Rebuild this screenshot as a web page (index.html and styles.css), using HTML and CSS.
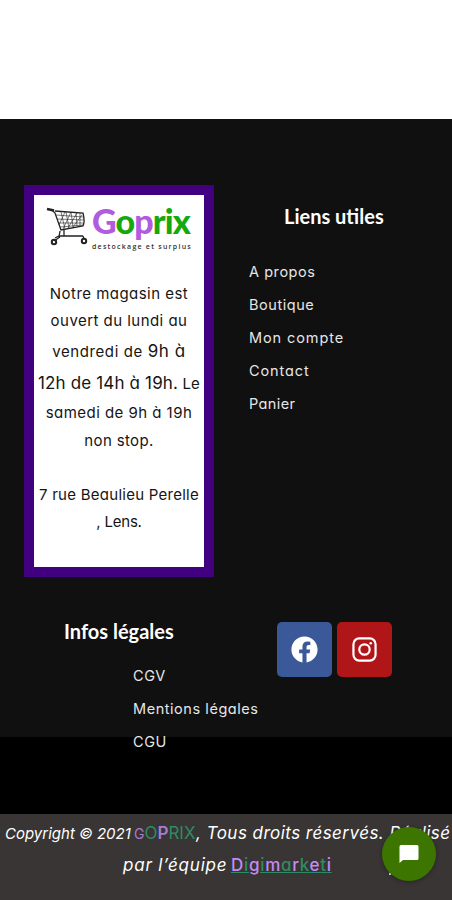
FILE: index.html
```html
<!DOCTYPE html>
<html lang="fr">
<head>
    <meta charset="UTF-8">
    <meta name="viewport" content="width=device-width, initial-scale=1.0">
    <title>Goprix</title>
    <link rel="stylesheet" href="styles.css">
</head>
<body>
    <main class="page-end"></main>
    <footer>
        <div class="footer-widgets">
            <section class="store-card">
                <div class="logo">
                    <svg class="cart" viewBox="0 0 42 40" fill="none" stroke="#222">
                        <path d="M1 3l7 1.500" stroke-width="2.600"/>
                        <path d="M6 4l3 3 6 17 22-4c2-4 1-9 0-13L9 5M14 25l-1 6M18 24v6M9 32l4-2h24M14 31l-6 4M37 30l1 3" stroke-width="1.300"/>
                        <path d="M10 9l27 2M11 13l27 1M12 17l25 0M14 21l23-2M15 6l4 17M20 6l3 16M25 6l2 15M30 6l1 14M34 7v13M19 6l-6 13M25 6l-8 17M31 7l-9 15M36 9l-9 12" stroke-width=".6"/>
                        <circle cx="8" cy="36" r="2.200" stroke-width="2"/>
                        <circle cx="38" cy="35" r="2.200" stroke-width="2"/>
                    </svg>
                    <div class="brand">
                        <div class="brand-name"><span class="violet">G</span>o<span class="violet">p</span>rix</div>
                        <div class="slogan">destockage et surplus</div>
                    </div>
                </div>
                <div class="hours">
                    <div class="l1">Notre magasin est</div>
                    <div class="l2">ouvert du lundi au</div>
                    <div class="l3">vendredi de <span class="big">9h à</span></div>
                    <div class="l4"><span class="big">12h de 14h à 19h.</span> Le</div>
                    <div class="l5">samedi de 9h à 19h</div>
                    <div class="l6">non stop.</div>
                </div>
                <div class="address">
                    <div class="l7">7 rue Beaulieu Perelle</div>
                    <div class="l8">, Lens.</div>
                </div>
            </section>
            <section class="useful">
                <h2>Liens utiles</h2>
                <ul>
                    <li class="propos">A propos</li>
                    <li class="boutique">Boutique</li>
                    <li class="compte">Mon compte</li>
                    <li class="contact">Contact</li>
                    <li class="panier">Panier</li>
                </ul>
            </section>
        </div>
        <div class="footer-bottom">
            <section class="legal">
                <h2>Infos légales</h2>
                <ul>
                    <li class="cgv">CGV</li>
                    <li class="mentions">Mentions légales</li>
                    <li class="cgu">CGU</li>
                </ul>
            </section>
            <div class="social">
                <a class="facebook" aria-label="Facebook">
                    <svg viewBox="0 0 512 512" fill="#fff"><path d="M504 256C504 119 393 8 256 8S8 119 8 256c0 123.800 90.700 226.400 209.300 245V327.700h-63V256h63v-54.600c0-62.200 37-96.500 93.700-96.500 27.100 0 55.500 4.800 55.500 4.800v61h-31.300c-30.800 0-40.400 19.100-40.400 38.700V256h68.800l-11 71.700h-57.800V501C413.300 482.400 504 379.800 504 256z"/></svg>
                </a>
                <a class="instagram" aria-label="Instagram">
                    <svg viewBox="0 0 26 26" fill="none" stroke="#fff" stroke-width="2.300"><rect x="1.500" y="1.500" width="23" height="23" rx="6"/><circle cx="13" cy="13" r="5.400"/><circle cx="19.500" cy="6.500" r="1.400" fill="#fff" stroke="none"/></svg>
                </a>
            </div>
        </div>
        <div class="copyright">
            <div class="copy-line"><span class="small">Copyright © 2021</span><span class="goprix"><span class="lilac g">G</span>O<span class="lilac p">P</span>RIX</span><span class="rights">, Tous droits réservés. Réalisé</span></div>
            <div class="copy-line second"><span class="team">par l’équipe</span><a class="digi"><span>D</span>i<span>g</span>i<span>m</span>a<span>r</span>k<span>e</span>t<span>i</span></a></div>
        </div>
    </footer>
    <span class="stray-dot"></span>
    <button class="chat" aria-label="Chat">
        <svg viewBox="0 0 20 20" fill="#fff"><path d="M2 1h16q1.500 0 1.500 1.500v12Q19.500 16 18 16H4L.5 19V2.500Q.5 1 2 1z"/></svg>
    </button>
</body>
</html>
```
FILE: styles.css
```css
* {
    box-sizing: border-box;
}
body {
    margin: 0;
    height: 900px;
    overflow: hidden;
    background: #fff;
    color: #151515;
    font-family: Inter, sans-serif;
    font-feature-settings: "cv11";
    font-size: 15px;
    white-space: nowrap;
}
.page-end {
    height: 119px;
}
footer {
    height: 781px;
    background: linear-gradient(#101010 618px, #000 618px);
}
.footer-widgets {
    display: flex;
    height: 492px;
    padding: 66px 0 0 24px;
}
.store-card {
    width: 190px;
    height: 392px;
    border: 10px solid #400080;
    background: #fff;
    text-align: center;
}
.logo {
    display: flex;
    height: 85px;
    padding: 11px 0 0 12px;
}
.cart {
    width: 42px;
    height: 40px;
    flex: none;
}
.brand {
    margin-left: 4px;
    text-align: left;
}
.brand-name {
    height: 37px;
    color: #16a80c;
    font-family: Lato, sans-serif;
    font-size: 34px;
    font-weight: 900;
    line-height: 30px;
    letter-spacing: -0.9px;
}
.violet {
    color: #b05be0;
}
.slogan {
    color: #333;
    font-family: "Open Sans", sans-serif;
    font-size: 7px;
    font-weight: 600;
    line-height: 8px;
    letter-spacing: 1.25px;
}
.hours,
.address {
    line-height: 27px;
}
.address {
    margin-top: 27px;
    letter-spacing: 0.26px;
}
.l1,
.l2,
.l5 {
    letter-spacing: 0.46px;
}
.l2 {
    line-height: 28px;
}
.l3 {
    line-height: 33px;
    letter-spacing: 0.6px;
}
.l4 {
    line-height: 31px;
    letter-spacing: 0.15px;
}
.l5 {
    line-height: 28px;
}
.l6 {
    letter-spacing: 0.35px;
}
.l8 {
    line-height: 28px;
    letter-spacing: -0.2px;
}
.big {
    font-size: 17px;
}
h2 {
    margin: 0;
    color: #fff;
    font-family: Lato, sans-serif;
    font-size: 20px;
    font-weight: 700;
    line-height: 24px;
}
ul {
    margin: 0;
    padding: 0;
    list-style: none;
}
li {
    color: #e6e6e6;
    font-size: 14.5px;
    line-height: 33px;
    letter-spacing: 0.55px;
}
.contact,
.compte {
    letter-spacing: 0.9px;
}
.panier {
    letter-spacing: 0.4px;
}
.useful {
    padding: 19px 0 0 35px;
}
.useful h2 {
    padding-left: 35px;
}
.useful ul {
    margin-top: 27px;
}
.footer-bottom {
    display: flex;
    height: 203px;
}
.legal {
    width: 277px;
    padding: 8px 0 0 64px;
}
.legal ul {
    margin: 16px 0 0 69px;
}
.social {
    display: flex;
    gap: 5px;
    padding-top: 11px;
}
.social a {
    display: flex;
    align-items: center;
    justify-content: center;
    width: 55px;
    height: 55px;
    border-radius: 5px;
}
.facebook {
    background: #3b5998;
}
.instagram {
    background: #b01518;
}
.social svg {
    width: 27px;
    height: 27px;
}
.instagram svg {
    width: 25px;
    height: 25px;
}
.copyright {
    height: 86px;
    padding-top: 3px;
    background: #383534;
    color: #fff;
    font-size: 17px;
}
.copy-line {
    display: flex;
    align-items: baseline;
    height: 32px;
    padding-left: 5px;
    line-height: 32px;
}
.small {
    width: 129px;
    font-size: 15px;
    font-style: italic;
}
.goprix {
    width: 62px;
    color: #2e8b62;
}
.lilac {
    color: #a77bd0;
}
.g {
    font-size: 14px;
}
.p {
    font-weight: 600;
}
.rights,
.team {
    font-style: italic;
}
.rights {
    letter-spacing: 0.46px;
}
.second {
    padding-left: 123px;
}
.team {
    width: 108px;
    letter-spacing: 0.8px;
}
.digi {
    color: #2e8b62;
    font-weight: 500;
    letter-spacing: 0.7px;
    text-decoration: underline;
}
.digi span {
    color: #c58af5;
}
.stray-dot {
    position: absolute;
    top: 873px;
    left: 389px;
    width: 2px;
    height: 2px;
    background: #ddd;
}
.chat {
    position: absolute;
    top: 827px;
    left: 382px;
    display: flex;
    align-items: center;
    justify-content: center;
    width: 54px;
    height: 54px;
    padding: 0;
    border: 0;
    border-radius: 50%;
    background: #3c7600;
    box-shadow: 0 1px 5px rgba(0, 0, 0, 0.3);
}
.chat svg {
    width: 20px;
    height: 20px;
}
```
